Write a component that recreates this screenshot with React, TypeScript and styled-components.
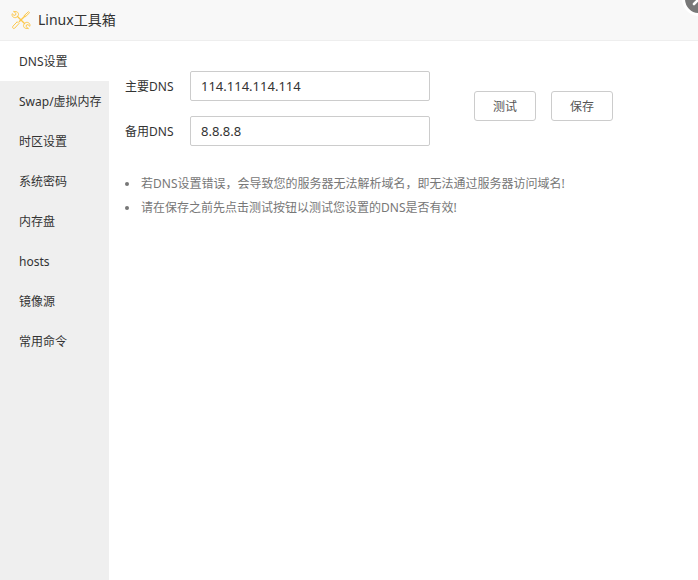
import React, { useState } from "react";
import styled, { createGlobalStyle } from "styled-components";

const GlobalStyle = createGlobalStyle`
  *, *::before, *::after { box-sizing: border-box; }
  html, body, #root { height: 100%; }
  body {
    margin: 0;
    background: #fff;
    color: #333;
    font-family: "Noto Sans", "Noto Sans CJK SC", sans-serif;
    font-size: 12px;
  }
  button, input { font-family: inherit; }
`;

const Dialog = styled.div`
  position: relative;
  display: flex;
  flex-direction: column;
  min-height: 100%;
  overflow: hidden;
`;

const TitleBar = styled.header`
  display: flex;
  align-items: center;
  gap: 7px;
  height: 41px;
  padding: 0 11px;
  background: #f8f8f8;
  border-bottom: 1px solid #eee;
`;

const Title = styled.h1`
  margin: 0;
  font-size: 14px;
  line-height: 20px;
  font-weight: 400;
`;

const CloseButton = styled.button`
  position: absolute;
  top: -18px;
  right: -18px;
  width: 34px;
  height: 34px;
  padding: 0;
  border: 3px solid #fff;
  border-radius: 50%;
  background: #787878;
  cursor: pointer;

  svg { display: block; margin: auto; }
`;

const Body = styled.div`
  display: flex;
  flex: 1;
`;

const Sidebar = styled.nav`
  flex: none;
  width: 109px;
  background: #efefef;
`;

const Tab = styled.button<{ $active: boolean }>`
  display: block;
  width: 100%;
  height: 40px;
  padding: 2px 0 0 19px;
  border: 0;
  background: ${(p) => (p.$active ? "#fff" : "transparent")};
  color: #333;
  font-size: 12px;
  line-height: 38px;
  text-align: left;
  white-space: nowrap;
  cursor: pointer;
`;

const Content = styled.main`
  flex: 1;
  min-width: 0;
  padding: 30px 16px;
`;

const Form = styled.form`
  display: flex;
  align-items: center;
  gap: 44px;
`;

const Fields = styled.div`
  display: grid;
  gap: 15px;
`;

const Field = styled.div`
  display: flex;
  align-items: center;
`;

const Label = styled.label`
  width: 65px;
  padding-top: 2px;
  line-height: 28px;
`;

const Input = styled.input`
  width: 240px;
  height: 30px;
  padding: 0 10px;
  border: 1px solid #ccc;
  border-radius: 2px;
  background: #fff;
  color: #333;
  font-size: 13px;
  outline: none;
`;

const Actions = styled.div`
  display: flex;
  gap: 15px;
  margin-bottom: 5px;
`;

const Button = styled.button`
  width: 62px;
  height: 30px;
  padding: 0;
  border: 1px solid #ccc;
  border-radius: 3px;
  background: #fff;
  color: #555;
  font-size: 12px;
  cursor: pointer;
`;

const Tips = styled.ul`
  margin: 26px 0 0;
  padding: 0;
  list-style: none;
  color: #777;
  line-height: 24px;
`;

const Tip = styled.li`
  display: flex;
  align-items: baseline;
  gap: 12px;

  &::before {
    content: "";
    flex: none;
    align-self: center;
    width: 4px;
    height: 4px;
    border-radius: 50%;
    background: #777;
  }
`;

const tabs = ["DNS设置", "Swap/虚拟内存", "时区设置", "系统密码", "内存盘", "hosts", "镜像源", "常用命令"];

const tips = [
  "若DNS设置错误，会导致您的服务器无法解析域名，即无法通过服务器访问域名!",
  "请在保存之前先点击测试按钮以测试您设置的DNS是否有效!",
];

function ToolsIcon() {
  return (
    <svg width="20" height="20" viewBox="0 0 20 20" fill="none" stroke="#fdc84b" strokeLinecap="round" strokeLinejoin="round" aria-hidden="true">
      <path d="M3 1.6 5 3.5 4.6 5 3 5.4 1.2 3.7C.4 6 2.4 8.3 5.2 7.5L7.4 5.4C8.1 2.8 5.9.8 3 1.6Z" />
      <path d="M17 18.4 15 16.5 15.4 15 17 14.6 18.8 16.3C19.6 14 17.6 11.7 14.8 12.5L12.6 14.6C11.9 17.2 14.1 19.2 17 18.4Z" />
      <path d="M6.5 6.6 13.5 13.4M8.4 11.4 14 6" strokeWidth="1.4" />
      <path d="M13.5 5.3 17.5 1.7 18.6 2.7 14.7 6.5Z" />
      <path d="M6.5 12 8 13.5 3.7 18.2C2.5 19.2.8 17.8 1.8 16.4Z" />
    </svg>
  );
}

export default function App() {
  const [active, setActive] = useState(0);
  const [primary, setPrimary] = useState("114.114.114.114");
  const [secondary, setSecondary] = useState("8.8.8.8");

  return (
    <>
      <GlobalStyle />
      <Dialog role="dialog" aria-labelledby="dialog-title">
        <TitleBar>
          <ToolsIcon />
          <Title id="dialog-title">Linux工具箱</Title>
        </TitleBar>
        <Body>
          <Sidebar>
            {tabs.map((name, i) => (
              <Tab key={name} type="button" $active={i === active} onClick={() => setActive(i)}>
                {name}
              </Tab>
            ))}
          </Sidebar>
          <Content>
            <Form onSubmit={(e) => e.preventDefault()}>
              <Fields>
                <Field>
                  <Label htmlFor="dns-primary">主要DNS</Label>
                  <Input id="dns-primary" value={primary} onChange={(e) => setPrimary(e.target.value)} />
                </Field>
                <Field>
                  <Label htmlFor="dns-secondary">备用DNS</Label>
                  <Input id="dns-secondary" value={secondary} onChange={(e) => setSecondary(e.target.value)} />
                </Field>
              </Fields>
              <Actions>
                <Button type="button">测试</Button>
                <Button type="submit">保存</Button>
              </Actions>
            </Form>
            <Tips>
              {tips.map((tip) => (
                <Tip key={tip}>{tip}</Tip>
              ))}
            </Tips>
          </Content>
        </Body>
        <CloseButton type="button" aria-label="关闭">
          <svg width="14" height="14" viewBox="0 0 14 14" stroke="#fff" strokeWidth="2.6" strokeLinecap="round" aria-hidden="true">
            <path d="M2 2 12 12M12 2 2 12" />
          </svg>
        </CloseButton>
      </Dialog>
    </>
  );
}
